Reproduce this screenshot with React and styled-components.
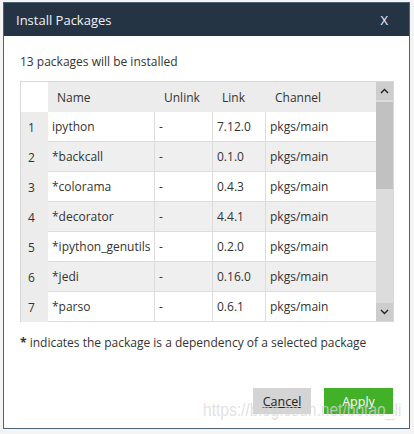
import { styled, createGlobalStyle } from "styled-components";

const Global = createGlobalStyle`
  html, body {
    margin: 0;
    padding: 0;
    background: #f4f4f4;
    font-family: "Open Sans", "DejaVu Sans", sans-serif;
  }
`;

const Page = styled.div`
  position: relative;
  width: 414px;
  height: 434px;
  padding: 2px 4px 5px 3px;
  box-sizing: border-box;
  overflow: hidden;
`;

const Dialog = styled.div`
  width: 407px;
  height: 427px;
  box-sizing: border-box;
  border: 1px solid #4d6476;
  background: #fff;
  display: flex;
  flex-direction: column;
`;

const Header = styled.div`
  height: 33px;
  background: #243445;
  color: #eef2f5;
  display: flex;
  align-items: center;
  justify-content: space-between;
  padding: 0 21px 0 12px;
  font-size: 13px;
`;

const Body = styled.div`
  flex: 1;
  display: flex;
  flex-direction: column;
  padding: 16px 16px 0 16px;
  color: #333;
  font-size: 12px;
`;

const Summary = styled.div`
  height: 20px;
  line-height: 20px;
  margin-bottom: 9px;
`;

const TableWrap = styled.div`
  display: flex;
  width: 374px;
  height: 241px;
  border: 1px solid #d8d8d8;
  box-sizing: border-box;
`;

const Grid = styled.div`
  display: grid;
  grid-template-columns: 27px 107px 58px 53px 110px;
  grid-auto-rows: 30px;
  width: 355px;
  flex: none;
`;

const Cell = styled.div`
  display: flex;
  align-items: center;
  padding-left: 4px;
  background: ${(p) => (p.$alt ? "#efefef" : "#fff")};
  border-right: ${(p) => (p.$last ? "none" : "1px solid #dcdcdc")};
  border-bottom: 1px solid #dcdcdc;
  box-sizing: border-box;
  white-space: nowrap;
  overflow: hidden;
`;

const HeadCell = styled.div`
  display: flex;
  align-items: center;
  padding-left: 9px;
  background: ${(p) => (p.$blank ? "#fff" : "#ececec")};
`;

const NumCell = styled.div`
  display: flex;
  align-items: center;
  padding-left: 7px;
  background: #ececec;
`;

const Scrollbar = styled.div`
  width: 17px;
  display: flex;
  flex-direction: column;
  background: #dcdcdc;
`;

const Arrow = styled.div`
  height: 18px;
  display: flex;
  align-items: center;
  justify-content: center;
  background: #cdcdcd;
`;

const Track = styled.div`
  flex: 1;
  display: flex;
  flex-direction: column;
  padding: 2px 0;
`;

const Thumb = styled.div`
  height: 87px;
  background: #c1c1c1;
`;

const Note = styled.div`
  margin-top: 13px;
  line-height: 16px;
`;

const Footer = styled.div`
  margin-top: auto;
  display: flex;
  justify-content: flex-end;
  gap: 13px;
  padding: 0 0 14px 0;
`;

const Button = styled.button`
  height: 26px;
  width: ${(p) => p.$w}px;
  border: none;
  font-family: inherit;
  font-size: 12.5px;
  background: ${(p) => (p.$primary ? "#43b02a" : "#d4d4d4")};
  color: ${(p) => (p.$primary ? "#fff" : "#222")};
  text-decoration: ${(p) => (p.$primary ? "none" : "underline")};
  padding: 0;
`;

const Watermark = styled.div`
  position: absolute;
  left: 203px;
  top: 399px;
  font-family: "Liberation Sans", Arial, sans-serif;
  font-size: 19px;
  white-space: nowrap;
  transform: scaleX(0.82);
  transform-origin: left center;
  color: rgba(215, 215, 215, 0.75);
  pointer-events: none;
`;

const rows = [
  ["ipython", "7.12.0"],
  ["*backcall", "0.1.0"],
  ["*colorama", "0.4.3"],
  ["*decorator", "4.4.1"],
  ["*ipython_genutils", "0.2.0"],
  ["*jedi", "0.16.0"],
  ["*parso", "0.6.1"],
];

const Chevron = ({ up }) => (
  <svg width="9" height="6" viewBox="0 0 9 6">
    <path
      d={up ? "M1 5 L4.5 1.5 L8 5" : "M1 1 L4.5 4.5 L8 1"}
      fill="none"
      stroke="#222"
      strokeWidth="1.4"
    />
  </svg>
);

export default function App() {
  return (
    <>
      <Global />
      <Page>
        <Dialog>
          <Header>
            <span>Install Packages</span>
            <span>X</span>
          </Header>
          <Body>
            <Summary>13 packages will be installed</Summary>
            <TableWrap>
              <Grid>
                <HeadCell $blank />
                <HeadCell>Name</HeadCell>
                <HeadCell>Unlink</HeadCell>
                <HeadCell>Link</HeadCell>
                <HeadCell>Channel</HeadCell>
                {rows.map(([name, link], i) => {
                  const alt = i % 2 === 1;
                  return [
                    <NumCell key={`n${i}`}>{i + 1}</NumCell>,
                    <Cell key={`a${i}`} $alt={alt}>{name}</Cell>,
                    <Cell key={`b${i}`} $alt={alt}>-</Cell>,
                    <Cell key={`c${i}`} $alt={alt}>{link}</Cell>,
                    <Cell key={`d${i}`} $alt={alt} $last>pkgs/main</Cell>,
                  ];
                })}
              </Grid>
              <Scrollbar>
                <Arrow>
                  <Chevron up />
                </Arrow>
                <Track>
                  <Thumb />
                </Track>
                <Arrow>
                  <Chevron />
                </Arrow>
              </Scrollbar>
            </TableWrap>
            <Note>
              <b>*</b> indicates the package is a dependency of a selected package
            </Note>
            <Footer>
              <Button $w={58}>Cancel</Button>
              <Button $w={69} $primary>Apply</Button>
            </Footer>
          </Body>
        </Dialog>
        <Watermark>https://blog.csdn.net/botao_li</Watermark>
      </Page>
    </>
  );
}
